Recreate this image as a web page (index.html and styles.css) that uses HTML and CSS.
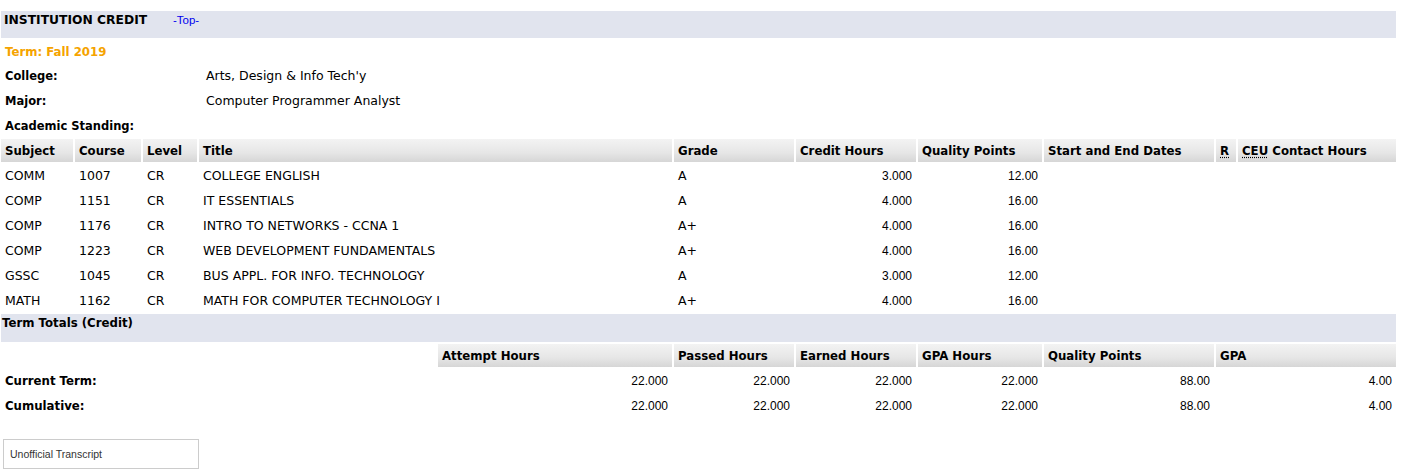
FILE: index.html
```html
<!DOCTYPE html>
<html>
<head>
<meta charset="utf-8">
<title>Institution Credit</title>
<link rel="stylesheet" href="styles.css">
</head>
<body>
<div class="page">
  <div class="section-bar">
    <span class="section-title">INSTITUTION CREDIT</span>
    <a class="top-link" href="#">-Top-</a>
  </div>

  <div class="info">
    <div class="term">Term: Fall 2019</div>
    <div class="info-row"><span class="lbl">College:</span><span class="val">Arts, Design &amp; Info Tech'y</span></div>
    <div class="info-row"><span class="lbl">Major:</span><span class="val">Computer Programmer Analyst</span></div>
    <div class="info-row"><span class="lbl">Academic Standing:</span><span class="val"></span></div>
  </div>

  <div class="courses">
    <div class="th">Subject</div>
    <div class="th">Course</div>
    <div class="th">Level</div>
    <div class="th">Title</div>
    <div class="th">Grade</div>
    <div class="th">Credit Hours</div>
    <div class="th">Quality Points</div>
    <div class="th">Start and End Dates</div>
    <div class="th"><abbr title="Repeat">R</abbr></div>
    <div class="th"><abbr title="Continuing Education Unit">CEU</abbr> Contact Hours</div>

    <div class="td">COMM</div><div class="td">1007</div><div class="td">CR</div><div class="td">COLLEGE ENGLISH</div><div class="td">A</div><div class="td num">3.000</div><div class="td num">12.00</div><div class="td"></div><div class="td"></div><div class="td"></div>
    <div class="td">COMP</div><div class="td">1151</div><div class="td">CR</div><div class="td">IT ESSENTIALS</div><div class="td">A</div><div class="td num">4.000</div><div class="td num">16.00</div><div class="td"></div><div class="td"></div><div class="td"></div>
    <div class="td">COMP</div><div class="td">1176</div><div class="td">CR</div><div class="td">INTRO TO NETWORKS - CCNA 1</div><div class="td">A+</div><div class="td num">4.000</div><div class="td num">16.00</div><div class="td"></div><div class="td"></div><div class="td"></div>
    <div class="td">COMP</div><div class="td">1223</div><div class="td">CR</div><div class="td">WEB DEVELOPMENT FUNDAMENTALS</div><div class="td">A+</div><div class="td num">4.000</div><div class="td num">16.00</div><div class="td"></div><div class="td"></div><div class="td"></div>
    <div class="td">GSSC</div><div class="td">1045</div><div class="td">CR</div><div class="td">BUS APPL. FOR INFO. TECHNOLOGY</div><div class="td">A</div><div class="td num">3.000</div><div class="td num">12.00</div><div class="td"></div><div class="td"></div><div class="td"></div>
    <div class="td">MATH</div><div class="td">1162</div><div class="td">CR</div><div class="td">MATH FOR COMPUTER TECHNOLOGY I</div><div class="td">A+</div><div class="td num">4.000</div><div class="td num">16.00</div><div class="td"></div><div class="td"></div><div class="td"></div>
  </div>

  <div class="totals-bar">Term Totals (Credit)</div>

  <div class="totals">
    <div class="blank"></div>
    <div class="th">Attempt Hours</div>
    <div class="th">Passed Hours</div>
    <div class="th">Earned Hours</div>
    <div class="th">GPA Hours</div>
    <div class="th">Quality Points</div>
    <div class="th">GPA</div>

    <div class="td lbl">Current Term:</div><div class="td num">22.000</div><div class="td num">22.000</div><div class="td num">22.000</div><div class="td num">22.000</div><div class="td num">88.00</div><div class="td num">4.00</div>
    <div class="td lbl">Cumulative:</div><div class="td num">22.000</div><div class="td num">22.000</div><div class="td num">22.000</div><div class="td num">22.000</div><div class="td num">88.00</div><div class="td num">4.00</div>
  </div>

  <div class="transcript-box">Unofficial Transcript</div>
</div>
</body>
</html>
```

FILE: styles.css
```css
html, body {
  margin: 0;
  padding: 0;
  background: #ffffff;
}

body {
  font-family: "DejaVu Sans", Verdana, sans-serif;
  font-size: 12.5px;
  color: #000;
}

.page {
  width: 1395px;
  margin-left: 1px;
  padding-top: 11px;
}

.section-bar {
  height: 27px;
  background: #e1e4ee;
  display: flex;
  align-items: flex-start;
  padding-top: 2px;
  box-sizing: border-box;
}

.section-title {
  font-weight: bold;
  font-size: 12.3px;
  padding-left: 3px;
  width: 169px;
}

.top-link {
  font-family: "Liberation Sans", Arial, sans-serif;
  font-size: 11.5px;
  color: #0000ee;
  text-decoration: none;
  padding-top: 1px;
}

.info {
  display: flex;
  flex-direction: column;
  gap: 2px;
  margin-top: 2px;
}

.term {
  height: 22px;
  box-sizing: border-box;
  padding-top: 2px;
  display: flex;
  align-items: center;
  padding-left: 4px;
  color: #f5a300;
  font-weight: bold;
  font-size: 11.75px;
}

.info-row {
  height: 23px;
  display: grid;
  grid-template-columns: 201px 1fr;
  align-items: center;
}

.info-row .lbl {
  font-weight: bold;
  font-size: 11.5px;
  padding-left: 4px;
}

.info-row .val {
  padding-left: 4px;
}

.courses {
  display: grid;
  grid-template-columns: 72px 66px 54px 473px 120px 120px 124px 170px 20px 158px;
  gap: 2px;
  margin-top: 2px;
}

.totals {
  display: grid;
  grid-template-columns: 435px 234px 120px 120px 124px 170px 180px;
  gap: 2px;
  margin-top: 2px;
}

.th {
  height: 23px;
  box-sizing: border-box;
  padding-top: 1px;
  line-height: 22px;
  padding-left: 4px;
  font-weight: bold;
  font-size: 11.75px;
  color: #000;
  background: linear-gradient(to bottom, #f3f3f3 0%, #e6e6e6 60%, #d6d6d6 100%);
  white-space: nowrap;
  overflow: hidden;
}

.th abbr {
  text-decoration: underline dotted;
  text-underline-offset: 2px;
}

.td {
  height: 23px;
  display: flex;
  align-items: center;
  padding-left: 4px;
  white-space: nowrap;
}

.td.num {
  justify-content: flex-end;
  padding-left: 0;
  padding-right: 4px;
  font-family: "Liberation Sans", Arial, sans-serif;
  font-size: 12px;
}

.td.lbl {
  font-weight: bold;
  font-size: 11.75px;
}

.totals-bar {
  height: 28px;
  background: #e1e4ee;
  margin-top: 2px;
  padding-left: 1px;
  padding-top: 2px;
  box-sizing: border-box;
  font-weight: bold;
  font-size: 11.75px;
}

.transcript-box {
  margin-top: 22px;
  margin-left: 2px;
  width: 196px;
  height: 30px;
  box-sizing: border-box;
  border: 1px solid #cccccc;
  display: flex;
  align-items: center;
  padding-left: 6px;
  font-family: "Liberation Sans", Arial, sans-serif;
  font-size: 10.5px;
  color: #333;
}
```
